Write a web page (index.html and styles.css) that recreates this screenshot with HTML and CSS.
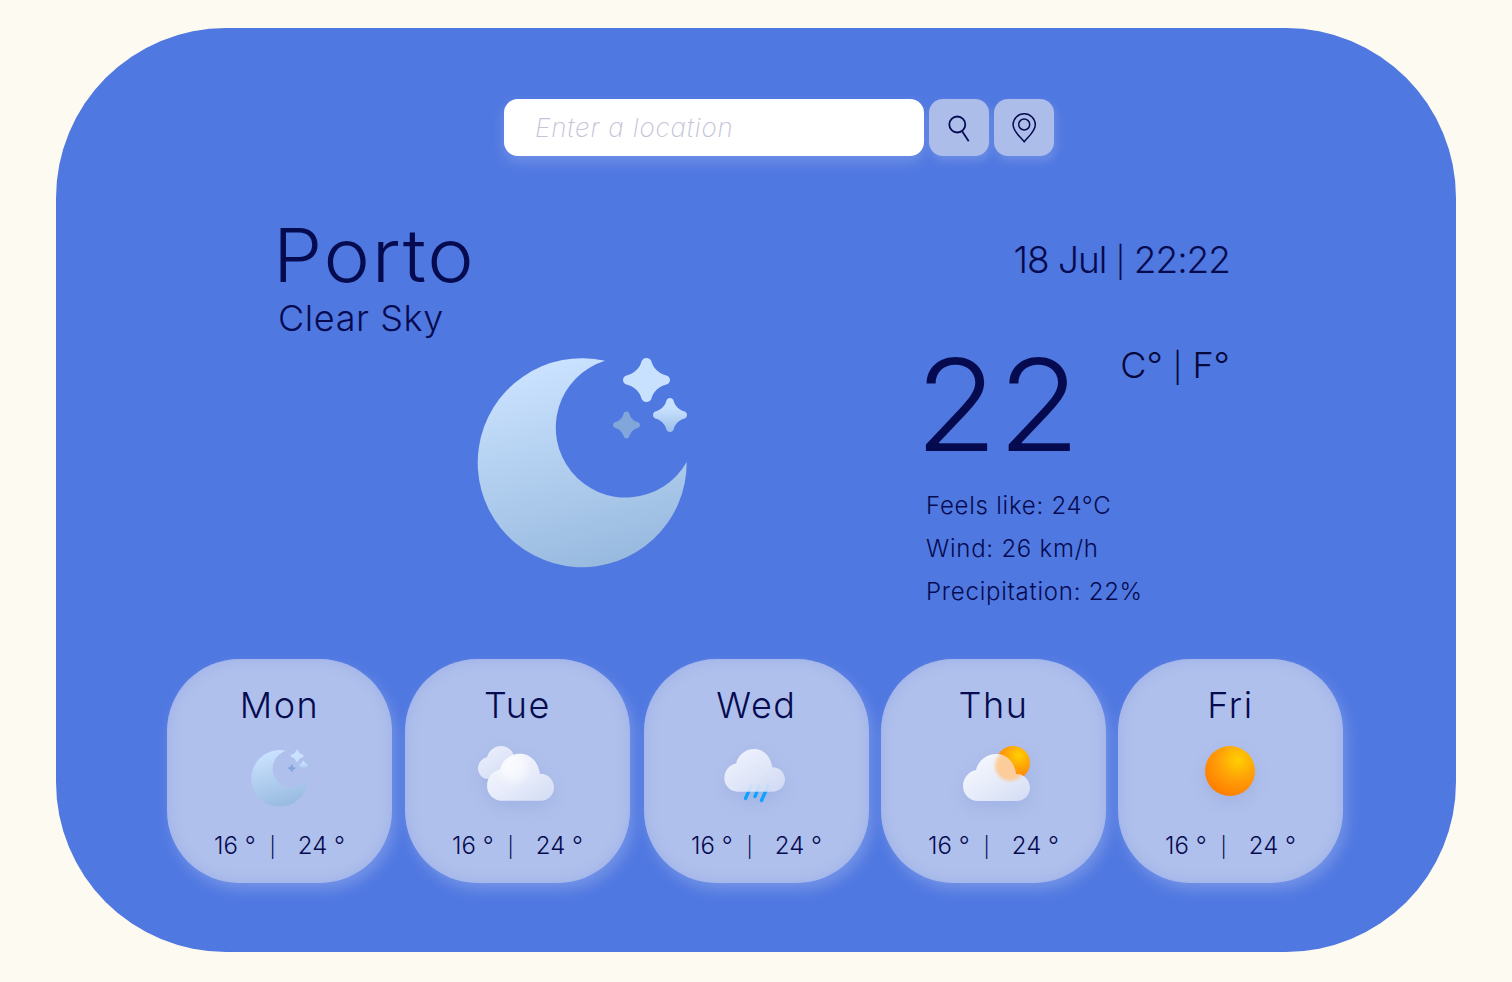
FILE: index.html
```html
<!DOCTYPE html>
<html lang="en">
<head>
<meta charset="utf-8">
<title>Weather</title>
<link rel="stylesheet" href="styles.css">
</head>
<body>
<main class="app">
  <form class="search">
    <input class="search-input" type="text" placeholder="Enter a location">
    <button class="icon-btn" type="button" aria-label="Search">
      <svg width="30" height="34" viewBox="0 0 30 34" fill="none" stroke="#060b50" stroke-width="1.800"><circle cx="13.300" cy="13.500" r="8"/><path d="M18.300 20.500L24.700 30.200"/></svg>
    </button>
    <button class="icon-btn" type="button" aria-label="Use my location">
      <svg width="30" height="34" viewBox="0 0 30 34" fill="none" stroke="#060b50" stroke-width="1.500"><path d="M15.200 30.800C11.500 26 4.100 20.500 4.100 13.800A11.100 11.100 0 0 1 26.300 13.800C26.300 20.500 18.900 26 15.200 30.800Z"/><circle cx="15.200" cy="13.500" r="5.500"/></svg>
    </button>
  </form>

  <section class="current">
    <div class="place">
      <h1 class="city">Porto</h1>
      <p class="sky">Clear Sky</p>
      <svg class="hero-moon" width="225" height="225" viewBox="470 350 225 225">
        <defs>
          <linearGradient id="moonFill" gradientUnits="userSpaceOnUse" x1="545" y1="358" x2="600" y2="567"><stop offset="0" stop-color="#cbe3ff"/><stop offset="1" stop-color="#98badf"/></linearGradient>
          <linearGradient id="starFill" x1="0" y1="0" x2="0" y2="1"><stop offset="0.3" stop-color="#c8e1ff"/><stop offset="1" stop-color="#9dbfe8"/></linearGradient>
          <linearGradient id="cloudFill" x1="0.1" y1="0.1" x2="0.9" y2="1"><stop offset="0" stop-color="#f6f8fe"/><stop offset="0.55" stop-color="#e6ebfa"/><stop offset="1" stop-color="#d4ddf4"/></linearGradient>
          <radialGradient id="sunFill" cx="0.66" cy="0.28" r="0.8"><stop offset="0" stop-color="#ffd000"/><stop offset="0.5" stop-color="#ff9f08"/><stop offset="1" stop-color="#ff7a00"/></radialGradient>
          <filter id="soft" x="-50%" y="-50%" width="200%" height="200%"><feGaussianBlur stdDeviation="1.500"/></filter>
          <filter id="softer" x="-50%" y="-50%" width="200%" height="200%"><feGaussianBlur stdDeviation="4"/></filter>
          <symbol id="moon" viewBox="470 350 225 225">
            <path fill="url(#moonFill)" d="M605 360.700A104.500 104.500 0 1 0 686.700 462A70 70 0 1 1 605 360.700Z"/>
            <path transform="translate(646.500 380) scale(.235 .22)" fill="#c8e1ff" d="M0-100C10-100 19-94 22-82C28-55 55-28 82-22C94-19 100-10 100 0C100 10 94 19 82 22C55 28 28 55 22 82C19 94 10 100 0 100C-10 100-19 94-22 82C-28 55-55 28-82 22C-94 19-100 10-100 0C-100-10-94-19-82-22C-55-28-28-55-22-82C-19-94-10-100 0-100Z"/>
            <path transform="translate(670 415) scale(.17 .17)" fill="url(#starFill)" d="M0-100C10-100 19-94 22-82C28-55 55-28 82-22C94-19 100-10 100 0C100 10 94 19 82 22C55 28 28 55 22 82C19 94 10 100 0 100C-10 100-19 94-22 82C-28 55-55 28-82 22C-94 19-100 10-100 0C-100-10-94-19-82-22C-55-28-28-55-22-82C-19-94-10-100 0-100Z"/>
            <path transform="translate(626.500 425) scale(.135 .135)" fill="#80a6da" d="M0-100C10-100 19-94 22-82C28-55 55-28 82-22C94-19 100-10 100 0C100 10 94 19 82 22C55 28 28 55 22 82C19 94 10 100 0 100C-10 100-19 94-22 82C-28 55-55 28-82 22C-94 19-100 10-100 0C-100-10-94-19-82-22C-55-28-28-55-22-82C-19-94-10-100 0-100Z"/>
          </symbol>
          <symbol id="cloud" viewBox="0 0 67 47" overflow="visible">
            <path fill="url(#cloudFill)" d="M15 47C6 47 0 40 0 32C0 24 6 17 13 16C15 7 23 0 33 0C43 0 51 7 53 20C61 20 67 26 67 34C67 41 61 47 54 47Z"/>
          </symbol>
          <clipPath id="thuCloud"><path transform="translate(20 14)" d="M15 47C6 47 0 40 0 32C0 24 6 17 13 16C15 7 23 0 33 0C43 0 51 7 53 20C61 20 67 26 67 34C67 41 61 47 54 47Z"/></clipPath>
          <clipPath id="tueCloud"><path transform="translate(20 13.500)" d="M15 47C6 47 0 40 0 32C0 24 6 17 13 16C15 7 23 0 33 0C43 0 51 7 53 20C61 20 67 26 67 34C67 41 61 47 54 47Z"/></clipPath>
        </defs>
        <use href="#moon" x="470" y="350" width="225" height="225"/>
      </svg>
    </div>
    <div class="now">
      <p class="date">18 Jul <span class="bar">|</span> 22:22</p>
      <div class="temp-row">
        <span class="temp">22</span>
        <span class="units">C° <span class="bar">|</span> F°</span>
      </div>
      <ul class="details">
        <li>Feels like: 24°C</li>
        <li>Wind: 26 km/h</li>
        <li>Precipitation: 22%</li>
      </ul>
    </div>
  </section>

  <section class="forecast">
    <article class="card">
      <h2 class="day">Mon</h2>
      <svg class="card-icon" width="101" height="70" viewBox="0 0 101 70"><use href="#moon" x="20.300" y="7.800" width="61" height="61"/></svg>
      <p class="range"><span class="low">16 °</span><span class="sep">|</span><span>24 °</span></p>
    </article>
    <article class="card card-gap-13">
      <h2 class="day">Tue</h2>
      <svg class="card-icon icon-shadow" width="101" height="70" viewBox="0 0 101 70">
        <use href="#cloud" x="11" y="6" width="47" height="33" opacity=".85"/>
        <use href="#cloud" x="20" y="13.500" width="67" height="47.500"/>
        <g clip-path="url(#tueCloud)"><circle cx="46" cy="28" r="14" fill="#ffffff" opacity=".6" filter="url(#softer)"/></g>
      </svg>
      <p class="range"><span class="low">16 °</span><span class="sep">|</span><span>24 °</span></p>
    </article>
    <article class="card card-gap-14">
      <h2 class="day">Wed</h2>
      <svg class="card-icon icon-shadow" width="101" height="70" viewBox="0 0 101 70">
        <g stroke="#0ea2ff" stroke-width="3.400" stroke-linecap="round" fill="none">
          <path d="M45 46L39.500 58.500"/><path d="M53 46L49 56.500"/><path d="M62 46L55.500 60.500"/>
        </g>
        <use href="#cloud" x="18.300" y="9" width="60.700" height="42.700" opacity=".9"/>
      </svg>
      <p class="range"><span class="low">16 °</span><span class="sep">|</span><span>24 °</span></p>
    </article>
    <article class="card card-gap-12">
      <h2 class="day">Thu</h2>
      <svg class="card-icon icon-shadow" width="101" height="70" viewBox="0 0 101 70">
        <circle cx="70" cy="23" r="17" fill="url(#sunFill)"/>
        <use href="#cloud" x="20" y="14" width="67" height="47"/>
        <g clip-path="url(#thuCloud)"><circle cx="67" cy="26" r="15" fill="#ffc78a" opacity=".85" filter="url(#soft)"/></g>
      </svg>
      <p class="range"><span class="low">16 °</span><span class="sep">|</span><span>24 °</span></p>
    </article>
    <article class="card card-gap-12">
      <h2 class="day">Fri</h2>
      <svg class="card-icon icon-shadow" width="101" height="70" viewBox="0 0 101 70"><circle cx="50" cy="31" r="25" fill="url(#sunFill)"/></svg>
      <p class="range"><span class="low">16 °</span><span class="sep">|</span><span>24 °</span></p>
    </article>
  </section>
</main>
</body>
</html>
```
FILE: styles.css
```css
* { box-sizing: border-box; }
html, body { height: 100%; margin: 0; }
body {
  background: #fdfaf1;
  color: #060b50;
  font-family: Inter, "Liberation Sans", sans-serif;
  font-weight: 300;
  overflow: hidden;
}
h1, h2, p, ul { margin: 0; padding: 0; font-weight: inherit; }
ul { list-style: none; }

.app {
  width: 1400px;
  height: 924px;
  margin: 28px 0 0 56px;
  padding: 71px 0 69px;
  background: #5078e1;
  border-radius: 170px;
  display: flex;
  flex-direction: column;
}

.search {
  display: flex;
  gap: 5px;
  height: 57px;
  padding-left: 448px;
}
.search-input {
  width: 420px;
  height: 57px;
  border: 0;
  outline: 0;
  border-radius: 14px;
  padding: 0 31px;
  background: #fff;
  font: italic 200 26px Inter, sans-serif;
  letter-spacing: .85px;
  color: #060b50;
  box-shadow: 0 6px 14px rgba(255, 255, 255, .18);
}
.search-input::placeholder { color: #c4c4d9; opacity: 1; }
.icon-btn {
  width: 60px;
  height: 57px;
  padding: 0;
  border: 0;
  border-radius: 14px;
  background: #adbdea;
  display: flex;
  align-items: center;
  justify-content: center;
  box-shadow: 2px 5px 10px rgba(255, 255, 255, .16);
}

.current {
  display: grid;
  grid-template-columns: 650px 304px;
  padding: 59px 0 0 220px;
}
.city {
  font-size: 74px;
  line-height: 81px;
  letter-spacing: 1.6px;
  margin-left: -3px;
  transform: scaleX(1.06);
  transform-origin: left center;
}
.sky {
  font-size: 36px;
  line-height: 44px;
  margin-left: 2px;
  letter-spacing: .6px;
}
.hero-moon {
  display: block;
  margin: 10px 0 0 194px;
}

.now {
  padding-top: 22px;
}
.date {
  font-size: 37px;
  line-height: 46px;
  text-align: right;
  letter-spacing: -1px;
}
.bar { font-size: .82em; }
.temp-row {
  display: flex;
  justify-content: space-between;
  margin-top: 55px;
}
.temp {
  font-size: 127px;
  font-weight: 350;
  line-height: 130px;
  margin-left: -11px;
  transform: scaleX(1.06);
  transform-origin: left center;
}
.units {
  font-size: 36px;
  line-height: 44px;
  margin-top: 3px;
  color: #05083a;
}
.details {
  margin-top: 14px;
  font-size: 24px;
  font-weight: 350;
  line-height: 43px;
  letter-spacing: .75px;
}

.forecast {
  display: flex;
  margin-top: auto;
  padding-left: 111px;
}
.card {
  width: 225px;
  height: 224px;
  padding-top: 24px;
  border-radius: 72px;
  background: #b0c0ec;
  display: flex;
  flex-direction: column;
  align-items: center;
  box-shadow: 4px 7px 14px rgba(255, 255, 255, .2), inset 0 0 14px rgba(80, 120, 225, .22);
}
.card-gap-12 { margin-left: 12px; }
.card-gap-13 { margin-left: 13px; }
.card-gap-14 { margin-left: 14px; }
.day {
  font-size: 36px;
  line-height: 44px;
  letter-spacing: 1.6px;
}
.card-icon {
  display: block;
  margin-top: 13px;
}
.icon-shadow { filter: drop-shadow(0 6px 8px rgba(80, 110, 190, .16)); }
.range {
  display: flex;
  align-items: baseline;
  margin-top: 21px;
  font-size: 24px;
  font-weight: 350;
  line-height: 30px;
}
.low { margin-right: 14px; }
.sep { margin-right: 22px; font-size: 20px; }
```
